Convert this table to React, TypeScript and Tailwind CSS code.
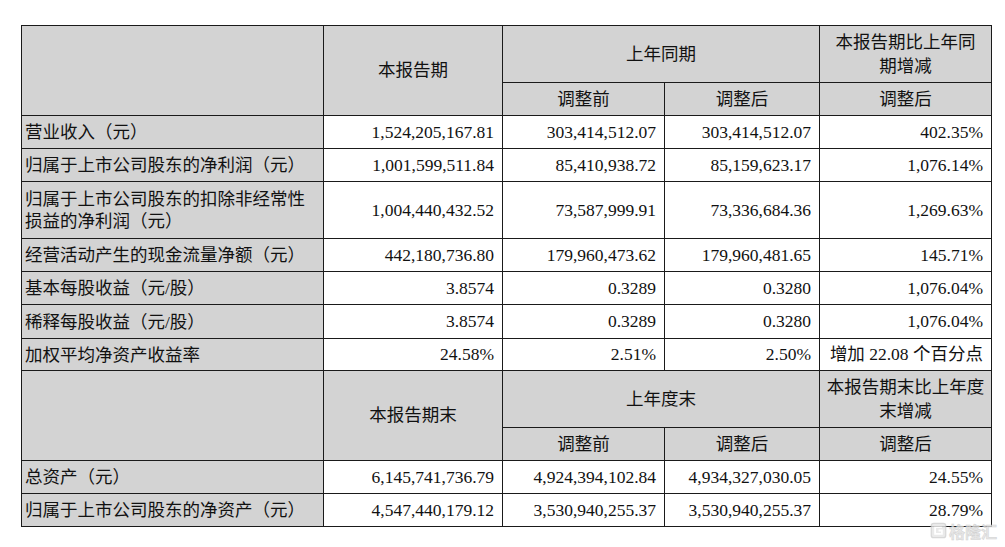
import React from "react";

const rows1: [string[], string, string, string, string, number][] = [
  [["营业收入（元）"], "1,524,205,167.81", "303,414,512.07", "303,414,512.07", "402.35%", 33],
  [["归属于上市公司股东的净利润（元）"], "1,001,599,511.84", "85,410,938.72", "85,159,623.17", "1,076.14%", 33],
  [["归属于上市公司股东的扣除非经常性", "损益的净利润（元）"], "1,004,440,432.52", "73,587,999.91", "73,336,684.36", "1,269.63%", 57],
  [["经营活动产生的现金流量净额（元）"], "442,180,736.80", "179,960,473.62", "179,960,481.65", "145.71%", 33],
  [["基本每股收益（元/股）"], "3.8574", "0.3289", "0.3280", "1,076.04%", 33],
  [["稀释每股收益（元/股）"], "3.8574", "0.3289", "0.3280", "1,076.04%", 34],
  [["加权平均净资产收益率"], "24.58%", "2.51%", "2.50%", "增加 22.08 个百分点", 32],
];

const rows2: [string[], string, string, string, string, number][] = [
  [["总资产（元）"], "6,145,741,736.79", "4,924,394,102.84", "4,934,327,030.05", "24.55%", 33],
  [["归属于上市公司股东的净资产（元）"], "4,547,440,179.12", "3,530,940,255.37", "3,530,940,255.37", "28.79%", 33],
];

const cell = "border border-[#1a1a1a] align-middle p-0";
const head = `${cell} bg-[#d3d3d3] text-center`;
const label = `${cell} bg-[#d3d3d3] text-left pl-[3px] leading-[22px]`;
const num = `${cell} bg-white text-right pr-[8px]`;

function Header({ main, group, change }: { main: string; group: string; change: [string, string] }) {
  return (
    <>
      <tr className="h-[57px]">
        <td rowSpan={2} className={head}></td>
        <td rowSpan={2} className={head}>{main}</td>
        <td colSpan={2} className={head}>{group}</td>
        <td className={`${head} leading-[24px]`}>
          {change[0]}
          <br />
          {change[1]}
        </td>
      </tr>
      <tr className="h-[33px]">
        <td className={head}>调整前</td>
        <td className={head}>调整后</td>
        <td className={head}>调整后</td>
      </tr>
    </>
  );
}

function Rows({ data }: { data: typeof rows1 }) {
  return (
    <>
      {data.map((r, i) => (
        <tr key={i} style={{ height: r[5] }}>
          <td className={label}>
            {r[0].map((l, j) => (
              <React.Fragment key={j}>
                {j > 0 && <br />}
                {l}
              </React.Fragment>
            ))}
          </td>
          <td className={num}>{r[1]}</td>
          <td className={num}>{r[2]}</td>
          <td className={num}>{r[3]}</td>
          <td className={num}>{r[4]}</td>
        </tr>
      ))}
    </>
  );
}

export default function App() {
  return (
    <div
      className="relative w-[1005px] h-[547px] bg-white pt-[25px] pl-[21px] text-[#111] text-[17.5px]"
      style={{ fontFamily: '"Liberation Serif", "Noto Sans CJK SC", serif' }}
    >
      <table className="table-fixed border-collapse w-[970px]">
        <colgroup>
          <col className="w-[302px]" />
          <col className="w-[179px]" />
          <col className="w-[162px]" />
          <col className="w-[155px]" />
          <col className="w-[172px]" />
        </colgroup>
        <tbody>
          <Header main="本报告期" group="上年同期" change={["本报告期比上年同", "期增减"]} />
          <Rows data={rows1} />
          <Header main="本报告期末" group="上年度末" change={["本报告期末比上年度", "末增减"]} />
          <Rows data={rows2} />
        </tbody>
      </table>
      <div className="absolute left-[930px] top-[522px] flex items-center gap-[2px] whitespace-nowrap opacity-80">
        <svg width="17" height="17" viewBox="0 0 20 20">
          <rect x="1.5" y="1.5" width="17" height="17" rx="3" fill="#e6e6e6" stroke="#cfcfcf" strokeWidth="1.5" />
          <path d="M14 6 H6 V14 H14 V10 H10" fill="none" stroke="#ffffff" strokeWidth="2.2" />
        </svg>
        <span
          className="text-[16px] leading-none text-[#e2e2e2] font-bold"
          style={{ fontFamily: '"Noto Sans CJK SC", sans-serif', WebkitTextStroke: "0.5px #c8c8c8" }}
        >
          格隆汇
        </span>
      </div>
    </div>
  );
}
